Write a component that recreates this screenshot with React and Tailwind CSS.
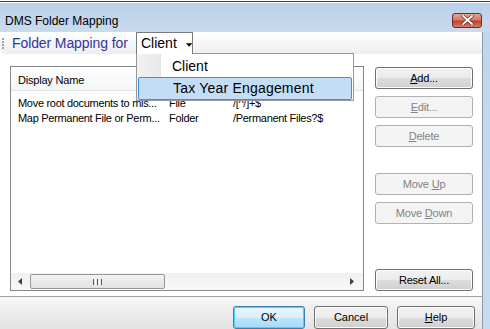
import React from "react";

function Btn({ children, disabled, className = "" }) {
  return (
    <div
      className={`h-[22px] flex items-center justify-center rounded-[3px] border text-[11px] tracking-[-0.2px] leading-none ${
        disabled
          ? "border-[#adb2b5] bg-[#f4f4f4] text-[#838383]"
          : "border-[#707070] bg-[linear-gradient(#f2f2f2_0%,#ebebeb_50%,#dddddd_51%,#cfcfcf_100%)] shadow-[inset_0_0_0_1px_#fbfbfb] text-black"
      } ${className}`}
    >
      {children}
    </div>
  );
}

function Row({ name, type, pattern }) {
  return (
    <div className="h-[15px] flex items-center text-[11px] tracking-[-0.3px] text-black">
      <div className="w-[158px] pl-[7px] whitespace-nowrap overflow-hidden">{name}</div>
      <div className="w-[64px] whitespace-nowrap">{type}</div>
      <div className="whitespace-nowrap">{pattern}</div>
    </div>
  );
}

export default function App() {
  return (
    <div className="w-[490px] h-[329px] overflow-hidden relative bg-white font-['Liberation_Sans',Arial,sans-serif] select-none">
      {/* window behind */}
      <div className="h-[2px] mt-[1px] bg-white border-t-[1px] border-[#3a3a3a]" />

      {/* Title bar */}
      <div className="h-[29px] flex items-center justify-between bg-[linear-gradient(#b9d1ea,#c9dbee)]">
        <span className="pl-[5px] pt-[7px] text-[12px] text-black">DMS Folder Mapping</span>
        <div className="mr-[8px] mt-[5px] w-[30px] h-[15px] rounded-[3px] border border-[#6e2b2b] bg-[linear-gradient(#e8a593_0%,#d47866_45%,#c0402f_55%,#d87a62_100%)] flex items-center justify-center">
          <svg width="13" height="10" viewBox="0 0 13 10">
            <path d="M2 1 L11 9 M11 1 L2 9" stroke="#5a3030" strokeWidth="3.2" strokeLinecap="square" />
            <path d="M2 1 L11 9 M11 1 L2 9" stroke="#ffffff" strokeWidth="1.8" strokeLinecap="square" />
          </svg>
        </div>
      </div>

      {/* Body */}
      <div className="flex h-[297px]">
        <div className="w-[483px] flex flex-col border-r border-[#8a9bb0]">
          {/* Toolbar */}
          <div className="h-[23px] flex items-center bg-[linear-gradient(#ffffff,#eceef1)] rounded-bl-[6px] relative">
            <div className="ml-[2px] flex flex-col gap-[1px]">
              <div className="w-[2px] h-[2px] bg-[#a0a0a0]" />
              <div className="w-[2px] h-[2px] bg-[#a0a0a0]" />
              <div className="w-[2px] h-[2px] bg-[#a0a0a0]" />
              <div className="w-[2px] h-[2px] bg-[#a0a0a0]" />
            </div>
            <span className="ml-[8px] text-[14px] tracking-[-0.1px] text-[#3333a0]">Folder Mapping for</span>
            <div className="absolute left-[136px] top-0 h-[22px] w-[57px] z-20 bg-white border border-b-0 border-[#7a7a7a] flex items-center pl-[4px] text-[14px] text-black">
              Client
              <svg width="7" height="4" viewBox="0 0 7 4" className="ml-[9px] mt-[2px]">
                <path d="M0 0 H7 L3.5 4 Z" fill="#000" />
              </svg>
            </div>
          </div>

          {/* Content */}
          <div className="h-[247px] flex pt-[12px] pl-[10px]">
            {/* List view */}
            <div className="w-[354px] h-[225px] border border-[#828790] bg-white flex flex-col">
              <div className="h-[24px] flex items-center border-b border-[#e5e5e5] bg-[linear-gradient(#ffffff,#f4f5f7)] text-[11px] tracking-[-0.2px] text-black">
                <div className="w-[158px] pl-[7px] pt-[2px] h-full flex items-center border-r border-[#e5e5e5]">Display Name</div>
              </div>
              <div className="flex-1 pt-[4px]">
                <Row name="Move root documents to mis..." type="File" pattern="/[^/]+$" />
                <Row name="Map Permanent File or Perm..." type="Folder" pattern="/Permanent Files?$" />
              </div>
              <div className="h-[17px] flex items-center bg-[linear-gradient(#f0f0f0,#f8f8f8)]">
                <svg width="4" height="7" viewBox="0 0 4 7" className="ml-[7px]">
                  <path d="M4 0 V7 L0 3.5 Z" fill="#404040" />
                </svg>
                <div className="ml-[8px] w-[135px] h-[15px] rounded-[2px] border border-[#979797] bg-[linear-gradient(#f3f3f3,#e2e2e2)] flex items-center justify-center gap-[1px]">
                  <div className="w-[1px] h-[6px] bg-[#555]" />
                  <div className="w-[1px] h-[6px] bg-[#fff]" />
                  <div className="w-[1px] h-[6px] bg-[#555]" />
                  <div className="w-[1px] h-[6px] bg-[#fff]" />
                  <div className="w-[1px] h-[6px] bg-[#555]" />
                </div>
                <div className="flex-1" />
                <svg width="4" height="7" viewBox="0 0 4 7" className="mr-[9px]">
                  <path d="M0 0 V7 L4 3.5 Z" fill="#404040" />
                </svg>
              </div>
            </div>

            {/* Buttons */}
            <div className="ml-[11px] w-[98px] flex flex-col pt-[1px]">
              <Btn>
                <span className="underline">A</span>dd...
              </Btn>
              <Btn disabled className="mt-[7px]">
                <span className="underline">E</span>dit...
              </Btn>
              <Btn disabled className="mt-[7px]">
                <span className="underline">D</span>elete
              </Btn>
              <Btn disabled className="mt-[26px]">
                Move&nbsp;<span className="underline">U</span>p
              </Btn>
              <Btn disabled className="mt-[7px]">
                Move&nbsp;<span className="underline">D</span>own
              </Btn>
              <Btn className="mt-[45px]">Reset All...</Btn>
            </div>
          </div>

          {/* Bottom bar */}
          <div className="flex-1 border-t border-[#a0a0a0] bg-[linear-gradient(#f7f7f7,#e3e3e3)] flex justify-end gap-[9px] pt-[9px] pr-[7px]">
            <div className="w-[72px] h-[23px] rounded-[3px] border border-[#3c7fb1] shadow-[inset_0_0_0_1px_#48d4ff] bg-[linear-gradient(#eaf6fd,#d9f0fc_50%,#bee6fd_51%,#a7d9f5)] flex items-center justify-center text-[11px] text-black">
              OK
            </div>
            <div className="w-[74px] h-[23px] rounded-[3px] border border-[#707070] bg-[linear-gradient(#f2f2f2_0%,#ebebeb_50%,#dddddd_51%,#cfcfcf_100%)] shadow-[inset_0_0_0_1px_#fbfbfb] flex items-center justify-center text-[11px] text-black">
              Cancel
            </div>
            <div className="w-[78px] h-[23px] rounded-[3px] border border-[#707070] bg-[linear-gradient(#f2f2f2_0%,#ebebeb_50%,#dddddd_51%,#cfcfcf_100%)] shadow-[inset_0_0_0_1px_#fbfbfb] flex items-center justify-center text-[11px] text-black">
              <span className="underline">H</span>elp
            </div>
          </div>
        </div>
        {/* right window frame */}
        <div className="flex-1 bg-[linear-gradient(#c0d6ee,#c8dcf0)]" />
      </div>

      {/* Dropdown menu */}
      <div className="absolute left-[136px] top-[53px] w-[218px] h-[48px] z-10 border border-[#979797] bg-white flex">
        <div className="w-[24px] h-full bg-[linear-gradient(90deg,#f1f1f1,#e9e9e9)] border-r border-[#e2e3e3]" />
        <div className="flex-1 pt-[1px]">
          <div className="h-[22px] flex items-center pl-[11px] text-[14px] text-black">Client</div>
        </div>
        <div className="absolute left-[1px] right-[1px] top-[23px] h-[23px] rounded-[2px] border border-[#3d8fe8] bg-[#c4ddf7] flex items-center pl-[34px] text-[14px] tracking-[0.2px] text-black">
          Tax Year Engagement
        </div>
      </div>
    </div>
  );
}
